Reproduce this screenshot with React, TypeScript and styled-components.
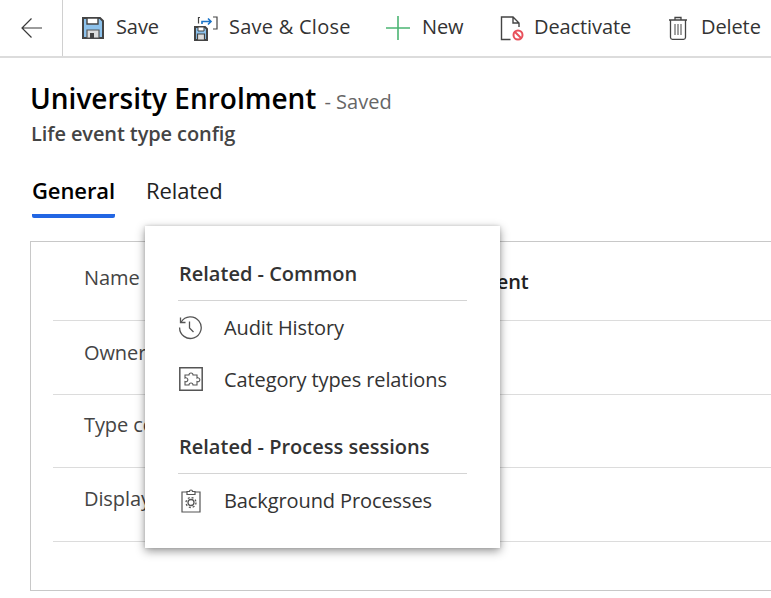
import React from "react";
import styled, { createGlobalStyle } from "styled-components";

const Global = createGlobalStyle`
  html, body { margin: 0; padding: 0; background: #fff; overflow: hidden; }
  body { font-family: "Open Sans", "Noto Sans", "Liberation Sans", sans-serif; }
  * { box-sizing: border-box; }
`;

const Page = styled.div`
  position: relative;
  width: 771px;
  height: 598px;
  overflow: hidden;
  background: #fff;
`;

const Toolbar = styled.div`
  display: flex;
  align-items: stretch;
  height: 58px;
  border-bottom: 2px solid #dcdcdc;
`;

const BackCell = styled.div`
  width: 63px;
  flex: none;
  display: flex;
  align-items: center;
  padding-left: 20px;
  border-right: 1px solid #d0d0d0;
`;

const Actions = styled.div`
  display: flex;
  align-items: center;
  padding-left: 19px;
  white-space: nowrap;
`;

const Action = styled.div<{ $w: number; $gap: number }>`
  display: flex;
  align-items: center;
  width: ${(p) => p.$w}px;
  flex: none;
  gap: ${(p) => p.$gap}px;
  font-size: 20px;
  line-height: 26px;
  color: #333;
`;

const ActionText = styled.span<{ $ls?: number }>`
  padding-bottom: 2px;
  letter-spacing: ${(p) => p.$ls ?? -0.1}px;
`;

const Header = styled.div`
  padding: 21px 0 0 31px;
`;

const TitleRow = styled.div`
  display: flex;
  align-items: baseline;
  gap: 8px;
  height: 39px;
  margin-left: -1px;
`;

const Title = styled.h1`
  margin: 0;
  font-size: 28px;
  line-height: 39px;
  font-weight: 600;
  color: #000;
`;

const Saved = styled.span`
  font-size: 20px;
  color: #666;
`;

const Subtitle = styled.div`
  font-size: 20px;
  line-height: 27px;
  padding-top: 2px;
  font-weight: 600;
  letter-spacing: -0.1px;
  color: #444;
`;

const Tabs = styled.div`
  display: flex;
  gap: 31px;
  margin: 27px 0 0 1px;
`;

const Tab = styled.div<{ $active?: boolean }>`
  height: 44px;
  font-size: 22px;
  line-height: 30px;
  padding-top: 1px;
  letter-spacing: -0.1px;
  font-weight: ${(p) => (p.$active ? 600 : 400)};
  color: ${(p) => (p.$active ? "#000" : "#222")};
  border-bottom: ${(p) => (p.$active ? "4px solid #2266e3" : "4px solid transparent")};
  border-radius: 0 0 2px 2px;
`;

const Card = styled.div`
  margin: 23px 0 0 30px;
  height: 350px;
  width: 760px;
  border: 1px solid #c8c8c8;
  padding: 0 0 0 22px;
`;

const Row = styled.div<{ $h: number }>`
  display: flex;
  align-items: center;
  height: ${(p) => p.$h}px;
  border-bottom: 1px solid #dcdcdc;
  padding-left: 31px;
  font-size: 20px;
  letter-spacing: -0.1px;
  color: #444;
`;

const FieldLabel = styled.div<{ $lift: number }>`
  width: 242px;
  flex: none;
  padding-bottom: ${(p) => p.$lift}px;
`;

const FieldValue = styled.div`
  font-weight: 600;
  color: #222;
`;

const Menu = styled.div`
  position: absolute;
  left: 145px;
  top: 226px;
  width: 355px;
  height: 322px;
  background: #fff;
  padding: 31px 33px 0 33px;
  box-shadow: 0 3px 9px rgba(0, 0, 0, 0.42), 0 0 3px rgba(0, 0, 0, 0.12);
`;

const MenuHeading = styled.div`
  height: 44px;
  font-size: 20px;
  line-height: 34px;
  font-weight: 600;
  padding-left: 1px;
  color: #333;
  border-bottom: 1px solid #d4d4d4;
`;

const MenuItem = styled.div`
  display: flex;
  align-items: center;
  gap: 21px;
  height: 52px;
  font-size: 20px;
  letter-spacing: -0.1px;
  color: #333;
`;

const MenuGroup = styled.div`
  & + & {
    margin-top: 25px;
  }
`;

const IconBox = styled.span`
  width: 25px;
  height: 25px;
  flex: none;
  display: flex;
  align-items: center;
  justify-content: center;
`;

const BackIcon = () => (
  <svg width="24" height="22" viewBox="0 0 24 22" fill="none" stroke="#3a3a3a" strokeWidth="1.2">
    <path d="M22 11H2M11.500 1.500 2 11l9.500 9.500" />
  </svg>
);

const SaveIcon = () => (
  <svg width="22" height="22" viewBox="0 0 22 22">
    <path d="M1 1h17l3 3v17H1z" fill="#8dc2ec" stroke="#444" strokeWidth="2" />
    <path d="M5 1h11v6H5z" fill="#fff" stroke="#444" strokeWidth="1.400" />
    <path d="M5 13h12v8H5z" fill="#ddd" stroke="#555" strokeWidth="1.200" />
    <path d="M8 16h4v5H8z" fill="#444" />
  </svg>
);

const SaveCloseIcon = () => (
  <svg width="24" height="25" viewBox="0 0 24 25">
    <path d="M1 11h10l2 2v11H1z" fill="#8dc2ec" stroke="#444" strokeWidth="2" />
    <path d="M4 11h6v4H4z" fill="#fff" stroke="#444" strokeWidth="1" />
    <path d="M3.500 18h7v6h-7z" fill="#ddd" stroke="#444" strokeWidth="1.200" />
    <path d="M6 1.500H4.500v6M19 1h4v12h-4" fill="none" stroke="#444" strokeWidth="1.200" />
    <path d="M8 8V5.500h9M14 2.500l3 3-3 3" fill="none" stroke="#1a73c8" strokeWidth="1.600" />
  </svg>
);

const PlusIcon = () => (
  <svg width="24" height="24" viewBox="0 0 24 24" stroke="#4bb573" strokeWidth="1.600">
    <path d="M0 12h24M12 0v24" />
  </svg>
);

const DeactivateIcon = () => (
  <svg width="24" height="25" viewBox="0 0 24 25" fill="none">
    <path d="M10.500 23.500H1.500V1h11.500l6 6v4M13 1v6h6" stroke="#444" strokeWidth="1.400" />
    <circle cx="18" cy="19" r="4.500" stroke="#e8505b" strokeWidth="2" fill="#fff" />
    <path d="M15 16l6 6" stroke="#e8505b" strokeWidth="2" />
  </svg>
);

const TrashIcon = () => (
  <svg width="20" height="24" viewBox="0 0 20 24" fill="none" stroke="#444" strokeWidth="1.300">
    <path d="M1 4h18M7 4V1.500h6V4M2.500 4v17.500a2 2 0 0 0 2 1.800h11a2 2 0 0 0 2-1.800V4" />
    <path d="M7 8v11M10 8v11M13 8v11" strokeWidth="1" />
  </svg>
);

const HistoryIcon = () => (
  <svg width="25" height="25" viewBox="0 0 25 25" fill="none" stroke="#555" strokeWidth="1.300">
    <path d="M3.200 7A10.800 10.800 0 1 1 1.600 12.500" />
    <path d="M2.500 2.500V7.500H7.500" />
    <path d="M11.500 6.500v6.500l4 4" />
  </svg>
);

const PuzzleIcon = () => (
  <svg width="24" height="24" viewBox="0 0 24 24" fill="none" stroke="#555">
    <path d="M.8.800h22.400v22.400H.8z" strokeWidth="1.500" />
    <path d="M6 8h4a2 2 0 1 1 4 0h4v3a2 2 0 1 1 0 3.600V18h-4a2 2 0 1 0-4 0H6v-3.400a2 2 0 1 0 0-3.600z" strokeWidth="1.100" />
  </svg>
);

const ClipboardGearIcon = () => (
  <svg width="20" height="25" viewBox="0 0 20 25" fill="none" stroke="#555" strokeWidth="1.200">
    <path d="M6 4H1v20h18V4h-5" />
    <path d="M6 6.500V3.500h2.500a1.500 1.500 0 0 1 3 0H14v3z" />
    <circle cx="10" cy="14.500" r="3" strokeWidth="1.300" />
    <circle cx="10" cy="14.500" r="5" strokeWidth="1.300" strokeDasharray="2 1.930" />
  </svg>
);

export default function App() {
  return (
    <Page>
      <Global />
      <Toolbar>
        <BackCell>
          <BackIcon />
        </BackCell>
        <Actions>
          <Action $w={112} $gap={12}><SaveIcon /><ActionText>Save</ActionText></Action>
          <Action $w={192} $gap={11}><SaveCloseIcon /><ActionText $ls={0.25}>Save &amp; Close</ActionText></Action>
          <Action $w={114} $gap={12}><PlusIcon /><ActionText>New</ActionText></Action>
          <Action $w={168} $gap={10}><DeactivateIcon /><ActionText>Deactivate</ActionText></Action>
          <Action $w={110} $gap={13}><TrashIcon /><ActionText>Delete</ActionText></Action>
        </Actions>
      </Toolbar>
      <Header>
        <TitleRow>
          <Title>University Enrolment</Title>
          <Saved>- Saved</Saved>
        </TitleRow>
        <Subtitle>Life event type config</Subtitle>
        <Tabs>
          <Tab $active>General</Tab>
          <Tab>Related</Tab>
        </Tabs>
      </Header>
      <Card>
        <Row $h={79}>
          <FieldLabel $lift={8}>Name</FieldLabel>
          <FieldValue>University Enrolment</FieldValue>
        </Row>
        <Row $h={74}><FieldLabel $lift={10}>Owner</FieldLabel></Row>
        <Row $h={73}><FieldLabel $lift={14}>Type code</FieldLabel></Row>
        <Row $h={74}><FieldLabel $lift={13}>Display</FieldLabel></Row>
      </Card>
      <Menu>
        <MenuGroup>
          <MenuHeading>Related - Common</MenuHeading>
          <MenuItem><IconBox><HistoryIcon /></IconBox>Audit History</MenuItem>
          <MenuItem><IconBox><PuzzleIcon /></IconBox>Category types relations</MenuItem>
        </MenuGroup>
        <MenuGroup>
          <MenuHeading>Related - Process sessions</MenuHeading>
          <MenuItem><IconBox><ClipboardGearIcon /></IconBox>Background Processes</MenuItem>
        </MenuGroup>
      </Menu>
    </Page>
  );
}
